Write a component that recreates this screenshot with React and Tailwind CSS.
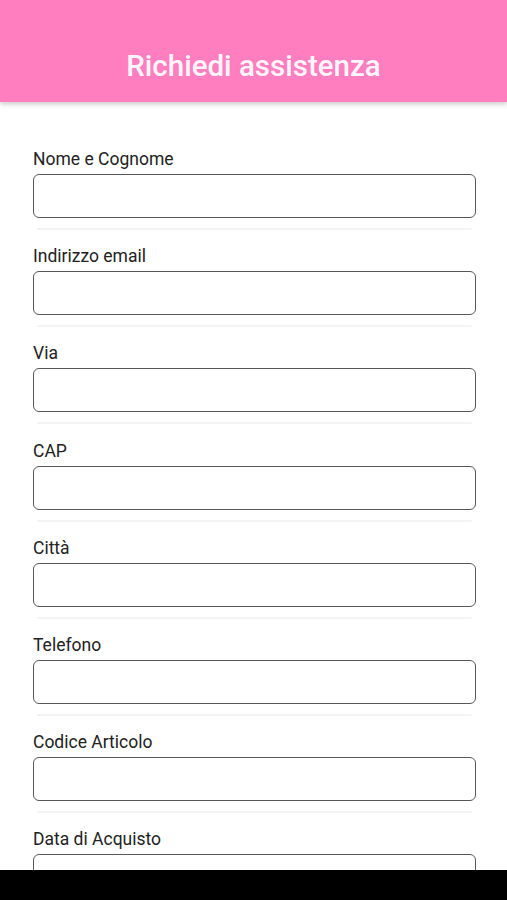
import React from "react";

const fields = [
  "Nome e Cognome",
  "Indirizzo email",
  "Via",
  "CAP",
  "Città",
  "Telefono",
  "Codice Articolo",
  "Data di Acquisto",
];

export default function App() {
  return (
    <div className="relative h-[900px] w-[507px] overflow-hidden bg-white" style={{ fontFamily: "Roboto, 'Noto Sans', sans-serif" }}>
      <header className="relative z-10 flex h-[102px] items-end justify-center bg-[#ff7ebf] pb-[17px] shadow-[0_2px_5px_rgba(0,0,0,0.22)]">
        <h1 className="text-[29.5px] font-medium leading-[38px] text-[#fff5fa]">Richiedi assistenza</h1>
      </header>
      <main className="flex flex-col pl-[33px] pr-[31px] pt-[45px]">
        {fields.map((f) => (
          <div key={f} className="flex h-[97.2px] shrink-0 flex-col">
            <label className="h-[27px] text-[17.5px] leading-[24px] text-[#222]">{f}</label>
            <div className="h-[44px] rounded-[6px] border-[1.5px] border-[#585858] bg-white" />
            <div className="mx-[4px] mt-[10px] h-[2px] rounded-full bg-[#f3f3f3]" />
          </div>
        ))}
      </main>
      <div className="absolute bottom-0 left-0 z-20 h-[30px] w-full bg-black" />
    </div>
  );
}
